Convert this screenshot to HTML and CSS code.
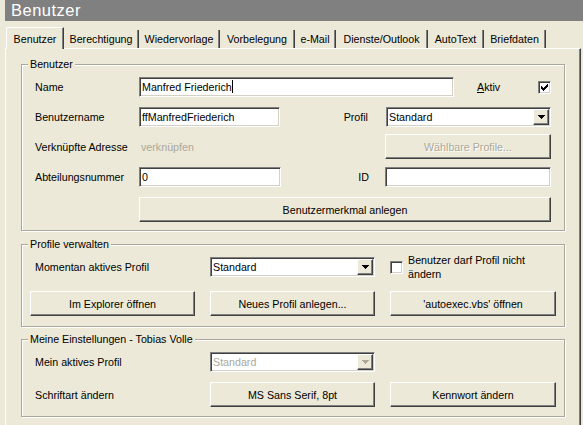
FILE: index.html
```html
<!DOCTYPE html>
<html lang="de">
<head>
<meta charset="utf-8">
<title>Benutzer</title>
<link rel="stylesheet" href="styles.css">
</head>
<body>
<div class="titlebar">Benutzer</div>
<div class="tabs">
  <div class="tab active">Benutzer</div>
  <div class="tab">Berechtigung</div>
  <div class="tab">Wiedervorlage</div>
  <div class="tab">Vorbelegung</div>
  <div class="tab">e-Mail</div>
  <div class="tab">Dienste/Outlook</div>
  <div class="tab">AutoText</div>
  <div class="tab">Briefdaten</div>
</div>
<div class="panel">
  <fieldset class="group g1">
    <legend>Benutzer</legend>
    <div class="gbody b1">
      <div class="row r1">
        <span class="lbl">Name</span>
        <div class="field w-name">Manfred Friederich<span class="caret"></span></div>
        <span class="aktiv"><u>A</u>ktiv</span>
        <span class="check push">
          <svg width="7" height="7" viewBox="0 0 7 7" shape-rendering="crispEdges"><rect x="0" y="2" width="1" height="3"/><rect x="1" y="3" width="1" height="3"/><rect x="2" y="4" width="1" height="3"/><rect x="3" y="3" width="1" height="3"/><rect x="4" y="2" width="1" height="3"/><rect x="5" y="1" width="1" height="3"/><rect x="6" y="0" width="1" height="3"/></svg>
        </span>
      </div>
      <div class="row r2">
        <span class="lbl">Benutzername</span>
        <div class="field w-user">ffManfredFriederich</div>
        <span class="rlbl profil">Profil</span>
        <div class="field select w-right"><span class="val">Standard</span><span class="arrow"><svg width="7" height="4" viewBox="0 0 7 4" shape-rendering="crispEdges"><rect x="0" y="0" width="7" height="1"/><rect x="1" y="1" width="5" height="1"/><rect x="2" y="2" width="3" height="1"/><rect x="3" y="3" width="1" height="1"/></svg></span></div>
      </div>
      <div class="row r3">
        <span class="lbl">Verknüpfte Adresse</span>
        <span class="link">verknüpfen</span>
        <div class="btn disabled w-right2">Wählbare Profile...</div>
      </div>
      <div class="row r4">
        <span class="lbl">Abteilungsnummer</span>
        <div class="field w-abt">0</div>
        <span class="rlbl idl">ID</span>
        <div class="field w-right2"></div>
      </div>
      <div class="row r5">
        <span class="lbl"></span>
        <div class="btn grow">Benutzermerkmal anlegen</div>
      </div>
    </div>
  </fieldset>

  <fieldset class="group g2">
    <legend>Profile verwalten</legend>
    <div class="gbody b2">
      <div class="grid3 gr1">
        <span class="lbl2">Momentan aktives Profil</span>
        <div class="field select"><span class="val">Standard</span><span class="arrow"><svg width="7" height="4" viewBox="0 0 7 4" shape-rendering="crispEdges"><rect x="0" y="0" width="7" height="1"/><rect x="1" y="1" width="5" height="1"/><rect x="2" y="2" width="3" height="1"/><rect x="3" y="3" width="1" height="1"/></svg></span></div>
        <div class="checkline"><span class="check"></span><span class="checktext">Benutzer darf Profil nicht<br>ändern</span></div>
      </div>
      <div class="grid3 gr2">
        <div class="btn">Im Explorer öffnen</div>
        <div class="btn">Neues Profil anlegen...</div>
        <div class="btn">'autoexec.vbs' öffnen</div>
      </div>
    </div>
  </fieldset>

  <fieldset class="group g3">
    <legend>Meine Einstellungen - Tobias Volle</legend>
    <div class="gbody b3">
      <div class="grid3 gr1b">
        <span class="lbl2">Mein aktives Profil</span>
        <div class="field select dis"><span class="val">Standard</span><span class="arrow"><svg width="7" height="4" viewBox="0 0 7 4" shape-rendering="crispEdges"><rect x="0" y="0" width="7" height="1"/><rect x="1" y="1" width="5" height="1"/><rect x="2" y="2" width="3" height="1"/><rect x="3" y="3" width="1" height="1"/></svg></span></div>
      </div>
      <div class="grid3 gr2">
        <span class="lbl2">Schriftart ändern</span>
        <div class="btn">MS Sans Serif, 8pt</div>
        <div class="btn">Kennwort ändern</div>
      </div>
    </div>
  </fieldset>
</div>
</body>
</html>
```
FILE: styles.css
```css
html, body {
  margin: 0;
  height: 425px;
  overflow: hidden;
}
body {
  background: #ECE9D8;
  font-family: "Liberation Sans", Arial, sans-serif;
  font-size: 10.7px;
  color: #000;
}

/* title */
.titlebar {
  margin-left: 5px;
  height: 21px;
  background: #808080;
  color: #fff;
  font-size: 16.5px;
  line-height: 21px;
  padding-left: 6px;
  letter-spacing: 0.5px;
}

/* tabs */
.tabs {
  display: grid;
  grid-template-columns: 58px 75px 81px 75px 41px 92px 56px 62px;
  height: 27px;
  align-items: end;
  padding-left: 6px;
}
.tab {
  box-sizing: border-box;
  height: 18px;
  line-height: 18px;
  text-align: center;
  white-space: nowrap;
  border-right: 1px solid #404040;
  box-shadow: inset -1px 0 #808080;
}
.tab.active {
  height: 22px;
  line-height: 20px;
  padding-top: 1px;
  margin-bottom: -1px;
  border-left: 1px solid #fff;
  border-top: 1px solid #fff;
  border-top-left-radius: 2px;
  background: #ECE9D8;
  position: relative;
  z-index: 1;
}

/* panel */
.panel {
  margin: 0 2px 0 5px;
  height: 380px;
  border-left: 1px solid #fff;
  border-top: 1px solid #fff;
  border-right: 1px solid #404040;
  box-shadow: inset -1px 0 #808080;
  padding: 0 15px 0 15px;
}

/* group boxes */
.group {
  margin: 7px 0 0;
  padding: 0;
  min-width: 0;
  border: 1px solid #ACA899;
  box-shadow: 1px 1px 0 #fff, inset 1px 1px 0 #fff;
}
.group.g1 { margin-top: 9px; }
.group.g3 { margin-top: 6px; }
.group legend {
  margin-left: 6px;
  padding: 0 2px;
  line-height: 13px;
  height: 13px;
  background: #ECE9D8;
}
.b1 { padding: 6px 13px 8px 13px; }
.b2 { padding: 6px 8px 10px 8px; }
.b3 { padding: 6px 8px 9px 8px; }

.row {
  display: flex;
  align-items: center;
  height: 20px;
}
.r1 { margin-bottom: 10px; }
.r2 { margin-bottom: 7px; }
.r3 { height: 25px; margin-bottom: 8px; }
.r4 { margin-bottom: 10px; }
.r5 { height: 25px; }

.lbl {
  width: 104px;
  flex: none;
  white-space: nowrap;
}
.rlbl {
  flex: 1;
  text-align: right;
}
.profil { padding-right: 18px; }
.idl { padding-right: 16px; }
.link {
  flex: 1;
  color: #ACA899;
  padding-left: 2px;
}
.aktiv { margin-left: 23px; }
.push { margin-left: auto; }

/* sunken field */
.field {
  box-sizing: border-box;
  height: 20px;
  background: #fff;
  border: 1px solid;
  border-color: #808080 #fff #fff #808080;
  box-shadow: inset 1px 1px #404040, inset -1px -1px #D4D0C8;
  padding-left: 2px;
  line-height: 18px;
  white-space: nowrap;
  overflow: hidden;
  flex: none;
}
.w-name { width: 315px; }
.w-user { width: 141px; }
.w-abt { width: 142px; }
.w-right { width: 165px; }
.w-right2 { width: 166px; }
.caret {
  display: inline-block;
  width: 1px;
  height: 13px;
  background: #000;
  vertical-align: -2px;
}

.select {
  display: flex;
  align-items: center;
  padding-right: 1px;
}
.select .val { flex: 1; }
.arrow {
  box-sizing: border-box;
  width: 16px;
  height: 16px;
  display: flex;
  align-items: center;
  justify-content: center;
  background: #ECE9D8;
  border: 1px solid;
  border-color: #fff #404040 #404040 #fff;
  box-shadow: inset -1px -1px #808080;
}
.arrow svg { fill: #000; }
.select.dis .val { color: #ACA899; }
.select.dis .arrow svg { fill: #ACA899; }

/* raised button */
.btn {
  box-sizing: border-box;
  height: 25px;
  border: 1px solid;
  border-color: #fff #404040 #404040 #fff;
  box-shadow: inset -1px -1px #808080;
  background: #ECE9D8;
  display: flex;
  align-items: center;
  justify-content: center;
  white-space: nowrap;
  flex: none;
}
.btn.grow { flex: 1; }
.btn.disabled {
  color: #ACA899;
  text-shadow: 1px 1px 0 #fff;
}

/* checkbox */
.check {
  box-sizing: border-box;
  width: 13px;
  height: 13px;
  flex: none;
  background: #fff;
  border: 1px solid;
  border-color: #808080 #fff #fff #808080;
  box-shadow: inset 1px 1px #404040, inset -1px -1px #D4D0C8;
  display: flex;
  align-items: center;
  justify-content: center;
}
.check svg { fill: #000; }

/* 3-column groups */
.grid3 {
  display: grid;
  grid-template-columns: 165px 165px 166px;
  column-gap: 15px;
  align-items: center;
}
.gr1 { grid-template-rows: 20px; height: 20px; margin-bottom: 14px; }
.gr1b { grid-template-rows: 20px; height: 20px; margin-bottom: 10px; }
.gr2 { grid-template-rows: 25px; height: 25px; }
.gr1 .field, .gr1b .field { width: 165px; }
.lbl2 { padding-left: 5px; white-space: nowrap; }
.checkline {
  display: flex;
  align-items: center;
}
.checktext {
  margin-left: 5px;
  line-height: 14px;
  white-space: nowrap;
}
```
